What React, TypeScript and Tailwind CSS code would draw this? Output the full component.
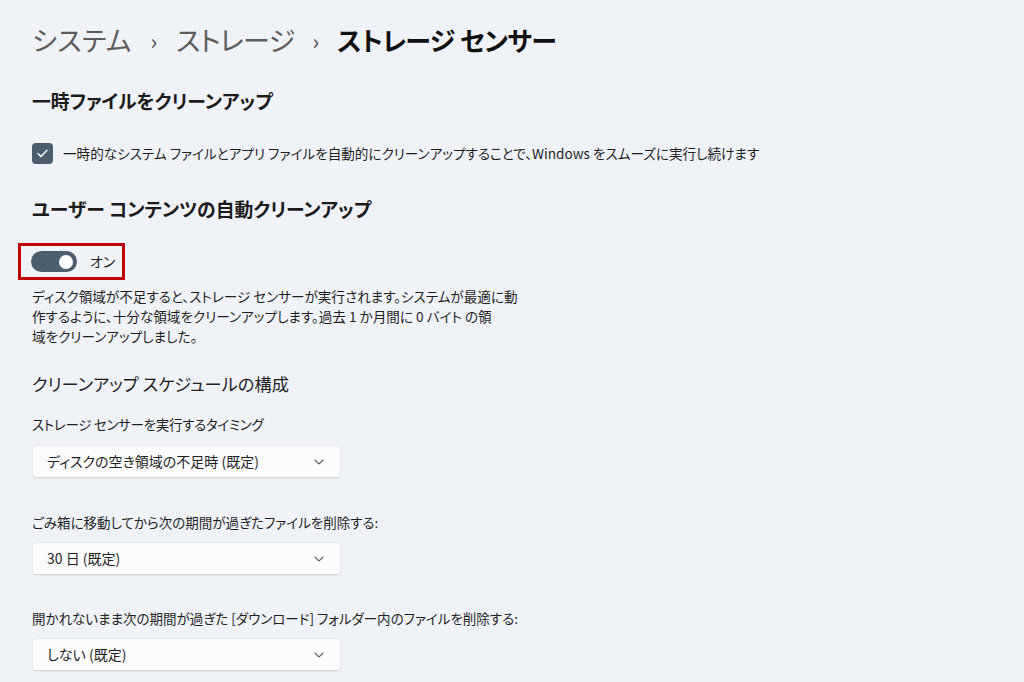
import React from "react";

const font = "font-['Noto_Sans_CJK_JP','Noto_Sans',sans-serif] [font-feature-settings:'palt']";

const Chevron = () => (
  <svg width="10" height="6" viewBox="0 0 10 6" fill="none">
    <path d="M1 1 L5 5 L9 1" stroke="#5f6368" strokeWidth="1.1" strokeLinecap="round" strokeLinejoin="round" />
  </svg>
);

const Dropdown = ({ value }: { value: string }) => (
  <div className="w-[309px] h-[33px] flex items-center justify-between pl-[14px] pr-[16px] bg-[#fcfcfd] rounded-[4px] border border-[#e6e8eb] border-b-[#d3d6da] shadow-[0_1px_1px_rgba(0,0,0,0.04)]">
    <span className="text-[14px] text-[#1f1f1f]">{value}</span>
    <Chevron />
  </div>
);

const App = () => {
  return (
    <div className={`w-[1024px] h-[682px] overflow-hidden bg-[#eff3f8] pl-8 pt-[22px] text-[#1b1b1b] ${font}`}>
      {/* breadcrumb */}
      <div className="flex items-center h-[36px] text-[27px] leading-[36px]">
        <span className="text-[#5c5c5c] tracking-[0.3px]">システム</span>
        <span className="text-[#4a4a4a] text-[22px] mx-[19px]">›</span>
        <span className="text-[#5c5c5c] tracking-[-0.6px]">ストレージ</span>
        <span className="text-[#4a4a4a] text-[22px] mx-[18px]">›</span>
        <span className="font-semibold text-[#111] text-[26px] tracking-[-0.6px]">ストレージ センサー</span>
      </div>

      <h2 className="mt-[29px] text-[18.8px] leading-[28px] font-semibold">一時ファイルをクリーンアップ</h2>

      <div className="mt-[28px] flex items-center h-[21px] gap-[10px]">
        <div className="w-[21px] h-[21px] rounded-[4px] bg-[#4c5e6d] flex items-center justify-center">
          <svg width="11" height="9" viewBox="0 0 11 9" fill="none">
            <path d="M1 4.6 L4 7.5 L10 1.2" stroke="white" strokeWidth="1.4" strokeLinecap="round" strokeLinejoin="round" />
          </svg>
        </div>
        <span className="text-[13.6px] text-[#1f1f1f]">一時的なシステム ファイルとアプリ ファイルを自動的にクリーンアップすることで、Windows をスムーズに実行し続けます</span>
      </div>

      <h2 className="mt-[31px] text-[18.8px] leading-[28px] font-semibold">ユーザー コンテンツの自動クリーンアップ</h2>

      <div className="mt-[20px] ml-[-14px] w-[107px] h-[37px] border-[3px] border-[#c00000] flex items-center pl-[10px] gap-[13px]">
        <div className="w-[46px] h-[21px] rounded-full bg-[#4c5e6d] flex items-center justify-end pr-[4px]">
          <div className="w-[14px] h-[14px] rounded-full bg-white" />
        </div>
        <span className="text-[14px] text-[#1f1f1f]">オン</span>
      </div>

      <p className="mt-[6px] text-[13.6px] leading-[20px] text-[#1f1f1f]">
        ディスク領域が不足すると、ストレージ センサーが実行されます。システムが最適に動
        <br />
        作するように、十分な領域をクリーンアップします。過去 1 か月間に 0 バイト の領
        <br />
        域をクリーンアップしました。
      </p>

      <h3 className="mt-[25px] text-[17.3px] leading-[26px] text-[#1f1f1f]">クリーンアップ スケジュールの構成</h3>

      <div className="mt-[17px] text-[13.5px] leading-[20px] text-[#1f1f1f] tracking-[-0.3px]">ストレージ センサーを実行するタイミング</div>
      <div className="mt-[11px]">
        <Dropdown value="ディスクの空き領域の不足時 (既定)" />
      </div>

      <div className="mt-[34px] text-[13.5px] leading-[20px] text-[#1f1f1f]">ごみ箱に移動してから次の期間が過ぎたファイルを削除する:</div>
      <div className="mt-[10px]">
        <Dropdown value="30 日 (既定)" />
      </div>

      <div className="mt-[33px] text-[13.5px] leading-[20px] text-[#1f1f1f]">開かれないまま次の期間が過ぎた [ダウンロード] フォルダー内のファイルを削除する:</div>
      <div className="mt-[10px]">
        <Dropdown value="しない (既定)" />
      </div>
    </div>
  );
};

export default App;
